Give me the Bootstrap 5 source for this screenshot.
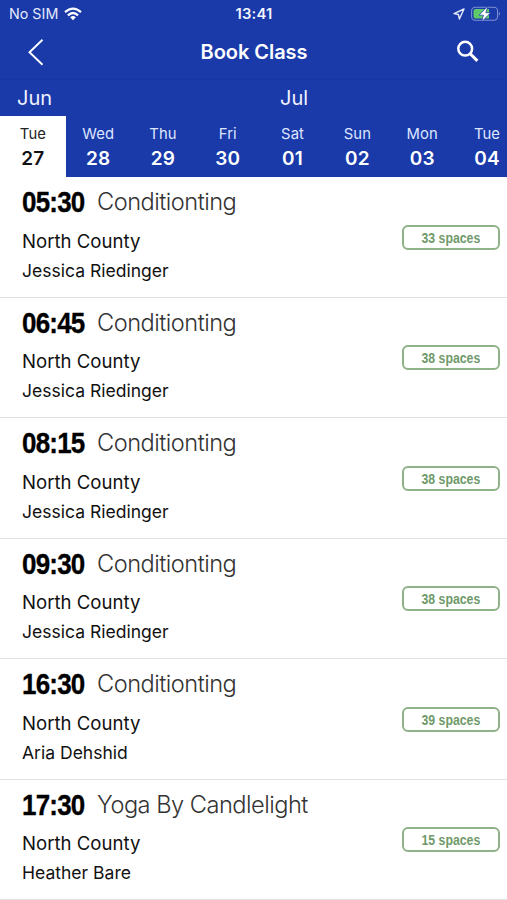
<!DOCTYPE html>
<html lang="en">
<head>
<meta charset="utf-8">
<meta name="viewport" content="width=device-width, initial-scale=1">
<title>Book Class</title>
<link href="https://cdn.jsdelivr.net/npm/bootstrap@5.3.0/dist/css/bootstrap.min.css" rel="stylesheet">
<style>
body{font-family:Inter,sans-serif;color:#111;background:#fff;height:900px;overflow:hidden}
.top-area{background:#1a3aaa;color:#fff;height:177px}
.status-bar{height:27px;padding:0 6px 0 9px;font-size:14.3px;color:#e4e9fb}
.status-bar .side{flex:1 1 0}
.clock{font-weight:600;font-size:14.8px;line-height:20px;padding-top:1px;margin-left:-2px;letter-spacing:.2px;color:#f2f4ff}
.title-bar{height:53px;padding:0 27px 2px;border-bottom:1px solid #1936a0}
.title-bar h1{font-size:20px;font-weight:600;letter-spacing:-.05px;padding-left:7px}
.month-row{height:36px;font-size:20px;line-height:36px;color:#eef1ff}
.month-june{width:280px;padding-left:17px}
.day-col{flex:0 0 64.8px;height:61px;padding-top:7.5px;text-align:center}
.day-col.first{flex-basis:65.8px}
.day-col.picked{background:#fff;color:#111}
.day-name{font-size:14.8px;line-height:20px;color:#dfe6ff;letter-spacing:.1px}
.picked .day-name{color:#222}
.day-num{font-size:19px;line-height:29px;font-weight:600;letter-spacing:.2px}
.class-item{height:120.5px;padding:7.4px 7.5px 0 22px;border-bottom:1px solid #e0e0e0}
.class-head{height:34px;line-height:35px;white-space:nowrap}
.class-time{width:75px;flex:none;font:700 30px/35px "Liberation Sans",sans-serif;color:#000;letter-spacing:-.9px}
.class-time b,.spaces b{display:inline-block;transform:scaleX(.865);transform-origin:left}
.class-time b{-webkit-text-stroke:.35px #000}
.class-name{font-size:23.6px;font-weight:300;letter-spacing:-.5px;color:#333}
.class-info{font-size:17.55px;line-height:29px;padding-top:8.6px}
.class-place{font-size:18.6px}
.spaces{width:98px;height:25px;margin-top:40.6px;border:2px solid #8fb288;border-radius:6px;color:#6f9a69;font:700 15px/22px "Liberation Sans",sans-serif;text-align:center}
.spaces b{transform:scaleX(.82);transform-origin:center;margin:0 -6px}
</style>
</head>
<body>
<header class="top-area overflow-hidden">
  <div class="status-bar d-flex align-items-center">
    <div class="side d-flex align-items-center"><span>No SIM</span>
      <svg style="margin-left:6px" width="18" height="14" viewBox="0 0 18 14" fill="none" stroke="#fff" stroke-width="2.3"><path d="M1 5.2Q9-2 17 5.2M3.9 8.3Q9 3.6 14.1 8.3"/><path d="M6.200 10.200Q9 8 11.800 10.200L9 13.200Z" fill="#fff" stroke="none"/></svg>
    </div>
    <span class="clock">13:41</span>
    <div class="side d-flex align-items-center justify-content-end">
      <svg width="12" height="12" viewBox="0 0 12 12" fill="none" stroke="#e4e9fb" stroke-width="1.4" stroke-linejoin="round"><path d="M11 1 1 5.600 5.400 6.500 6.400 11Z"/></svg>
      <svg style="margin-left:6px" width="30" height="16" viewBox="0 0 30 16"><rect x=".6" y="1.200" width="26" height="13" rx="3.700" fill="none" stroke="#7f91d2" stroke-width="1.100"/><path d="M4.500 3H18v9.500H4.500A2 2 0 0 1 2.500 10.500V5A2 2 0 0 1 4.500 3Z" fill="#5ecb68"/><path d="M28 5.800q2 2 0 4Z" fill="#7f91d2"/><path d="M16.800 0 8 9.200h4.500L10.500 16 19.600 6.700H14.800Z" fill="#fff" stroke="#1a3aaa" stroke-width=".7"/></svg>
    </div>
  </div>
  <div class="title-bar d-flex align-items-center justify-content-between">
    <svg width="18" height="28" viewBox="0 0 18 28" fill="none" stroke="#fff" stroke-width="1.9"><path d="M15.500 1.800 2.500 14.300 15.500 26.700"/></svg>
    <h1 class="mb-0">Book Class</h1>
    <svg width="24" height="24" viewBox="0 0 24 24" fill="none" stroke="#fff"><circle cx="9.200" cy="8.700" r="6.900" stroke-width="2.500"/><path d="m14.200 13.700 7.200 7.200" stroke-width="3"/></svg>
  </div>
  <div class="month-row d-flex"><span class="month-june">Jun</span><span>Jul</span></div>
  <div class="d-flex">
    <div class="day-col first picked"><div class="day-name">Tue</div><div class="day-num">27</div></div>
    <div class="day-col"><div class="day-name">Wed</div><div class="day-num">28</div></div>
    <div class="day-col"><div class="day-name">Thu</div><div class="day-num">29</div></div>
    <div class="day-col"><div class="day-name">Fri</div><div class="day-num">30</div></div>
    <div class="day-col"><div class="day-name">Sat</div><div class="day-num">01</div></div>
    <div class="day-col"><div class="day-name">Sun</div><div class="day-num">02</div></div>
    <div class="day-col"><div class="day-name">Mon</div><div class="day-num">03</div></div>
    <div class="day-col"><div class="day-name">Tue</div><div class="day-num">04</div></div>
  </div>
</header>
<main>
  <div class="class-item d-flex justify-content-between"><div><div class="class-head d-flex"><span class="class-time"><b>05:30</b></span><span class="class-name">Conditionting</span></div><div class="class-info"><div class="class-place">North County</div><div>Jessica Riedinger</div></div></div><div class="spaces"><b>33 spaces</b></div></div>
  <div class="class-item d-flex justify-content-between"><div><div class="class-head d-flex"><span class="class-time"><b>06:45</b></span><span class="class-name">Conditionting</span></div><div class="class-info"><div class="class-place">North County</div><div>Jessica Riedinger</div></div></div><div class="spaces"><b>38 spaces</b></div></div>
  <div class="class-item d-flex justify-content-between"><div><div class="class-head d-flex"><span class="class-time"><b>08:15</b></span><span class="class-name">Conditionting</span></div><div class="class-info"><div class="class-place">North County</div><div>Jessica Riedinger</div></div></div><div class="spaces"><b>38 spaces</b></div></div>
  <div class="class-item d-flex justify-content-between"><div><div class="class-head d-flex"><span class="class-time"><b>09:30</b></span><span class="class-name">Conditionting</span></div><div class="class-info"><div class="class-place">North County</div><div>Jessica Riedinger</div></div></div><div class="spaces"><b>38 spaces</b></div></div>
  <div class="class-item d-flex justify-content-between"><div><div class="class-head d-flex"><span class="class-time"><b>16:30</b></span><span class="class-name">Conditionting</span></div><div class="class-info"><div class="class-place">North County</div><div>Aria Dehshid</div></div></div><div class="spaces"><b>39 spaces</b></div></div>
  <div class="class-item d-flex justify-content-between"><div><div class="class-head d-flex"><span class="class-time"><b>17:30</b></span><span class="class-name">Yoga By Candlelight</span></div><div class="class-info"><div class="class-place">North County</div><div>Heather Bare</div></div></div><div class="spaces"><b>15 spaces</b></div></div>
</main>
<script src="https://cdn.jsdelivr.net/npm/bootstrap@5.3.0/dist/js/bootstrap.bundle.min.js"></script>
</body>
</html>
